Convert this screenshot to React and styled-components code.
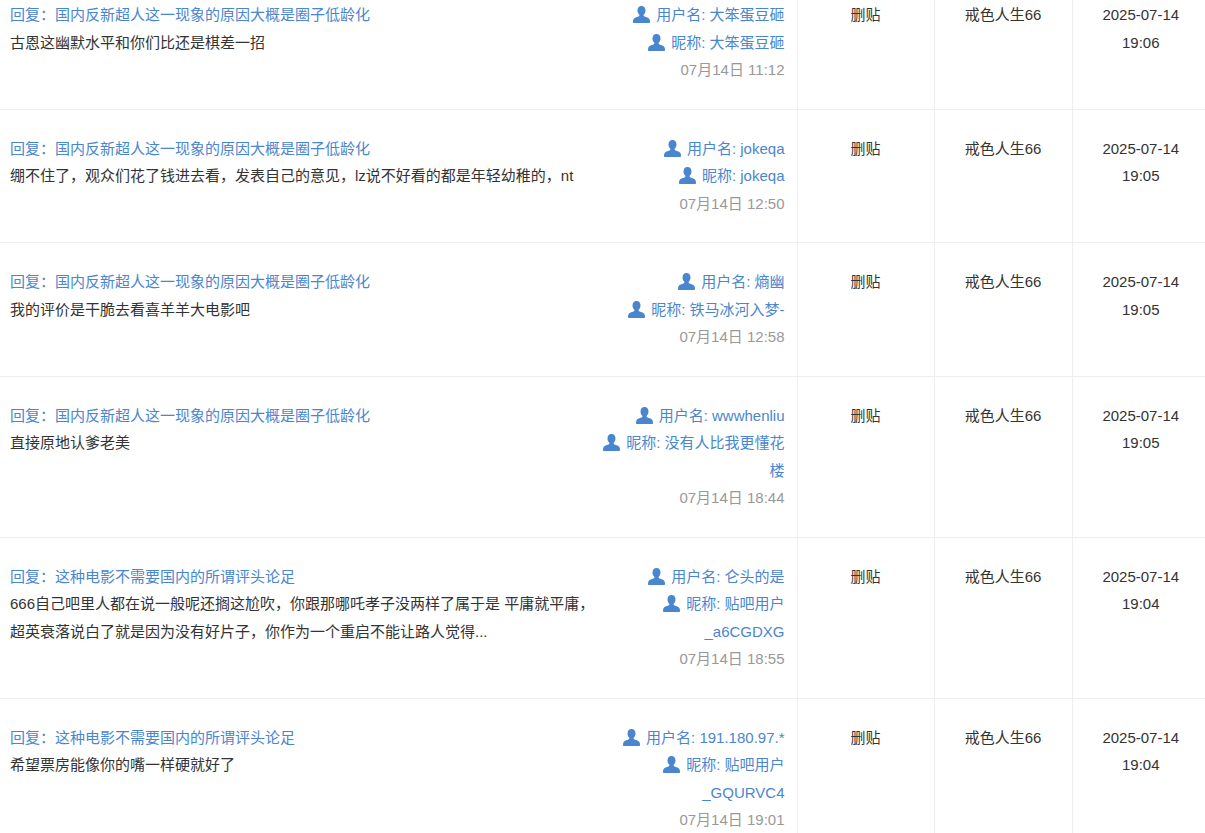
import React from 'react'
import styled, { createGlobalStyle } from 'styled-components'

const GlobalStyle = createGlobalStyle`
  html, body {
    margin: 0;
    height: 833px;
    overflow: hidden;
    background: #fff;
  }
`

const Table = styled.table`
  width: 1205px;
  margin-top: -24px;
  border-collapse: collapse;
  table-layout: fixed;
  font-family: "Liberation Sans", "Noto Sans CJK SC", sans-serif;
  font-size: 15px;
  line-height: 27.5px;
  color: #333;
`

const Row = styled.tr`
  border-bottom: 1px solid #eceeef;
`

const Cell = styled.td`
  padding: 25px 12px 25px 10px;
  vertical-align: top;
  border-right: 1px solid #eceeef;
`

const CenterCell = styled.td`
  padding: 25px 12px;
  vertical-align: top;
  text-align: center;
  border-right: 1px solid #eceeef;

  &:last-child {
    padding-left: 16px;
    border-right: 0;
  }
`

const Post = styled.div`
  display: flex;
  justify-content: space-between;
`

const Body = styled.div`
  width: 590px;
  flex-shrink: 0;
`

const Link = styled.a`
  color: #4a86cf;
  text-decoration: none;
`

const Side = styled.div`
  width: 185px;
  text-align: right;
`

const Glyph = styled.svg`
  width: 17px;
  height: 17px;
  margin-right: 6px;
  vertical-align: -3px;
  fill: #4a86cf;
`

const Time = styled.div`
  color: #999;
`

const UserIcon = () => (
  <Glyph viewBox="0 0 17 17">
    <path d="M8.5 0c-2.600 0-4 1.900-4 4.400 0 1.700.6 3.200 1.600 4.100.3.3.4.7.3 1.100-.1.4-.4.7-.9.9-1.900.7-4.300 1.200-5 2.700C.1 14 0 15 0 16c0 .6.4 1 1 1h15c.6 0 1-.4 1-1 0-1-.1-2-.5-2.800-.7-1.500-3.100-2-5-2.700-.5-.2-.8-.5-.9-.9-.1-.4 0-.8.3-1.100 1-.9 1.600-2.400 1.600-4.100C12.500 1.900 11.100 0 8.500 0z" />
  </Glyph>
)

const posts = [
  { title: '回复：国内反新超人这一现象的原因大概是圈子低龄化', text: '古恩这幽默水平和你们比还是棋差一招', user: '大笨蛋豆砸', nick: '大笨蛋豆砸', at: '07月14日 11:12', day: '19:06' },
  { title: '回复：国内反新超人这一现象的原因大概是圈子低龄化', text: '绷不住了，观众们花了钱进去看，发表自己的意见，lz说不好看的都是年轻幼稚的，nt', user: 'jokeqa', nick: 'jokeqa', at: '07月14日 12:50', day: '19:05' },
  { title: '回复：国内反新超人这一现象的原因大概是圈子低龄化', text: '我的评价是干脆去看喜羊羊大电影吧', user: '熵幽', nick: '铁马冰河入梦-', at: '07月14日 12:58', day: '19:05' },
  { title: '回复：国内反新超人这一现象的原因大概是圈子低龄化', text: '直接原地认爹老美', user: 'wwwhenliu', nick: '没有人比我更懂花楼', at: '07月14日 18:44', day: '19:05' },
  { title: '回复：这种电影不需要国内的所谓评头论足', text: '666自己吧里人都在说一般呢还搁这尬吹，你跟那哪吒孝子没两样了属于是 平庸就平庸，超英衰落说白了就是因为没有好片子，你作为一个重启不能让路人觉得...', user: '仑头的是', nick: '贴吧用户_a6CGDXG', at: '07月14日 18:55', day: '19:04' },
  { title: '回复：这种电影不需要国内的所谓评头论足', text: '希望票房能像你的嘴一样硬就好了', user: '191.180.97.*', nick: '贴吧用户_GQURVC4', at: '07月14日 19:01', day: '19:04' },
]

export default function App() {
  return (
    <>
      <GlobalStyle />
      <Table>
        <colgroup>
          <col width="797" />
          <col width="137" />
          <col width="138" />
          <col width="133" />
        </colgroup>
        <tbody>
          {posts.map((post, i) => (
            <Row key={i}>
              <Cell>
                <Post>
                  <Body>
                    <div><Link href="#">{post.title}</Link></div>
                    <div>{post.text}</div>
                  </Body>
                  <Side>
                    <div><Link href="#"><UserIcon />{`用户名: ${post.user}`}</Link></div>
                    <div><Link href="#"><UserIcon />{`昵称: ${post.nick}`}</Link></div>
                    <Time>{post.at}</Time>
                  </Side>
                </Post>
              </Cell>
              <CenterCell>删贴</CenterCell>
              <CenterCell>戒色人生66</CenterCell>
              <CenterCell>2025-07-14<br />{post.day}</CenterCell>
            </Row>
          ))}
        </tbody>
      </Table>
    </>
  )
}
